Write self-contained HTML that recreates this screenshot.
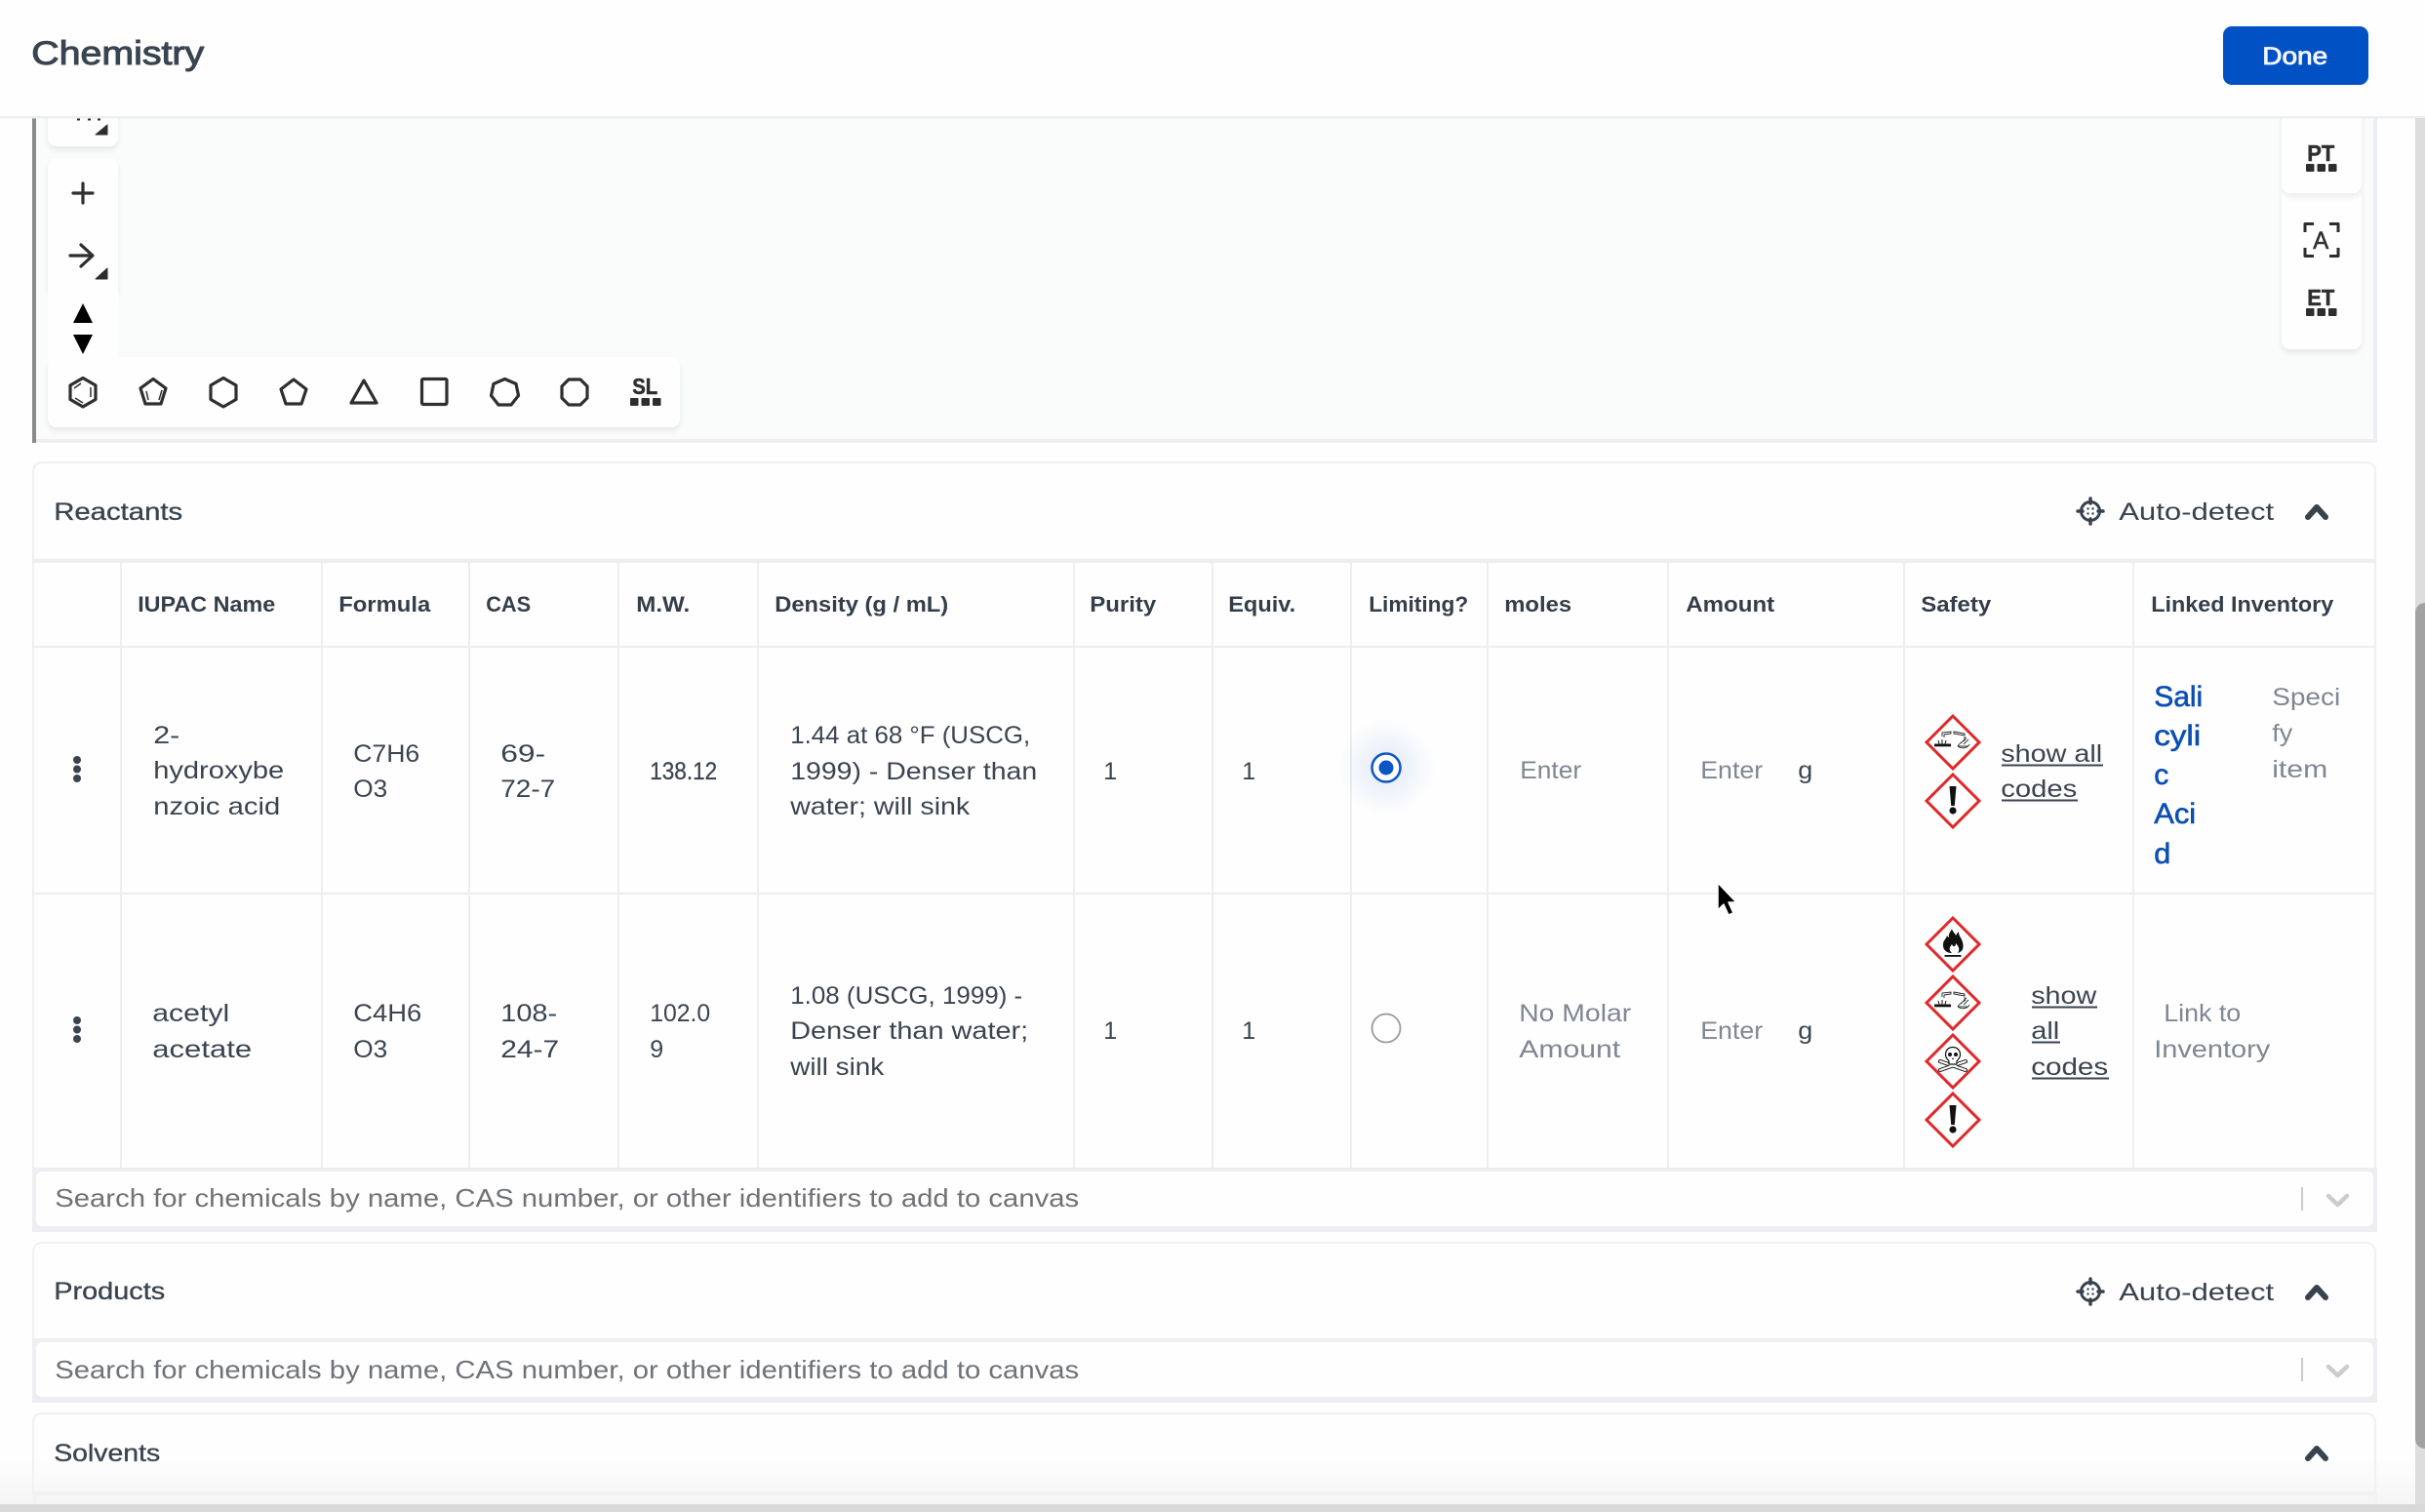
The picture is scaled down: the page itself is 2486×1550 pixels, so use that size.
<!DOCTYPE html>
<html lang="en">
<head>
<meta charset="utf-8">
<title>Chemistry</title>
<style>
html,body{margin:0;padding:0;background:#fefefe;width:2486px;height:1550px;overflow:hidden}
svg{display:block}
text{font-family:"Liberation Sans",sans-serif;font-size:25px;fill:#3a4450;transform:translateX(-.8px)}
.th{font-weight:700;font-size:22px;fill:#343e4a}
.sec{font-size:25px;stroke:#3a4450;stroke-width:.35}
.ph{fill:#7f8792}
.srch{fill:#6f7378;font-size:26px}
.link{fill:#0b4fb3;font-size:30px;stroke:#0b4fb3;stroke-width:.6}
.num{stroke:#3a4450;stroke-width:.25}
.ic{fill:none;stroke:#2e2e2e;stroke-width:3.2;stroke-linejoin:round;stroke-linecap:round}
.thin{fill:none;stroke:#2e2e2e;stroke-width:1.5}
.sq{fill:#2e2e2e}
.lbl{font-weight:700;font-size:23px;fill:#2e2e2e;stroke:#2e2e2e;stroke-width:.5}
.ln{fill:#eceef1}
.dm{fill:#fff;stroke:#e0282a;stroke-width:3}
.chev{fill:none;stroke:#38424e;stroke-width:6;stroke-linecap:round;stroke-linejoin:round}
.dn{fill:none;stroke:#cccccc;stroke-width:4.5;stroke-linecap:round;stroke-linejoin:round}
</style>
</head>
<body>
<svg xmlns="http://www.w3.org/2000/svg" width="2486" height="1550" viewBox="0 0 2486 1550">
<defs>
<filter id="sh" x="-20%" y="-20%" width="140%" height="140%"><feDropShadow dx="0" dy="4" stdDeviation="3" flood-color="#000" flood-opacity=".07"/></filter>
<radialGradient id="glow"><stop offset="0" stop-color="#0b55c4" stop-opacity=".13"/><stop offset=".5" stop-color="#0b55c4" stop-opacity=".06"/><stop offset="1" stop-color="#0b55c4" stop-opacity="0"/></radialGradient>
<linearGradient id="fade" x1="0" y1="0" x2="0" y2="1"><stop offset="0" stop-color="#f4f4f4" stop-opacity="0"/><stop offset="1" stop-color="#f4f4f4" stop-opacity=".9"/></linearGradient>
<g id="d"><polygon class="dm" points="0,-27 27,0 0,27 -27,0"/></g>
<g id="excl"><use href="#d"/><path d="M-3.500,-15 L3.500,-15 L1.800,5 L-1.800,5 Z" fill="#111"/><circle cx="0" cy="10" r="3.600" fill="#111"/></g>
<g id="corr"><use href="#d"/>
<path fill="none" stroke="#222" stroke-width=".9" d="M-11,-6 L-11,-10 L-2,-11 L-2,-9 L-9,-8 M-9,-8 L-9,-5 M1,-11 L12,-9 L12,-7 L1,-9 Z M12,-6 L12,-3"/>
<rect x="-19" y="1.500" width="17" height="2.800" fill="#111"/>
<path d="M-14,1.500 L-15,-2 M-11,1.500 L-11,-3 M-8,1.500 L-7,-2" stroke="#111" stroke-width="1"/>
<path fill="none" stroke="#333" stroke-width=".9" d="M5,4 C7,0 11,-1 13,-3 M5,4 C9,7 15,6 17,2 M8,1 L14,-5 M11,2 L16,-3 M5,4 L15,4"/></g>
<g id="flame"><use href="#d"/>
<path d="M-1,-16 C0,-12 2,-12 3,-9 C5,-12 5,-13 6,-12 C6,-8 10,-6 10.500,1 C11,6 8,8 5,9 C8,5 5,1 3,-1 C3,3 0,3 -1,0 C-3,3 -5,5 -1,9 C-6,9 -10.500,6 -10,0 C-10,-4 -7,-5 -6,-9 C-5,-7 -4,-7 -4,-7 C-5,-11 -2,-13 -1,-16 Z" fill="#111"/>
<rect x="-8.500" y="11" width="17" height="1.800" fill="#111"/></g>
<g id="skull"><use href="#d"/>
<path d="M-13,0 L13,9 M13,0 L-13,9" stroke="#111" stroke-width="4" stroke-linecap="round"/>
<path d="M-13,0 L13,9 M13,0 L-13,9" stroke="#fff" stroke-width="2" stroke-linecap="round"/>
<path fill="#fff" stroke="#111" stroke-width="1.200" d="M-7.500,-7 C-7.500,-17 7.500,-17 7.500,-7 C7.500,-3 5,-2 4,0 L4,3 L-4,3 L-4,0 C-5,-2 -7.500,-3 -7.500,-7 Z"/>
<circle cx="-3" cy="-7" r="2" fill="#111"/><circle cx="3" cy="-7" r="2" fill="#111"/><path d="M0,-4 L-1,-2 L1,-2 Z" fill="#111"/></g>
<g id="target"><circle cx="0" cy="0" r="9.500" fill="none" stroke="#38424e" stroke-width="3"/><path d="M0,-13 V-8 M0,13 V8 M-13,0 H-8 M13,0 H8" stroke="#38424e" stroke-width="3.500" stroke-linecap="round"/><circle cx="-2.500" cy="-2.500" r="1.200" fill="#38424e"/><circle cx="2.500" cy="-2.500" r="1.200" fill="#38424e"/><circle cx="-2.500" cy="2.500" r="1.200" fill="#38424e"/><circle cx="2.500" cy="2.500" r="1.200" fill="#38424e"/></g>
<g id="sq3"><rect x="0" y="0" width="8.500" height="8" rx="1" class="sq"/><rect x="11.500" y="0" width="8.500" height="8" rx="1" class="sq"/><rect x="23" y="0" width="8.500" height="8" rx="1" class="sq"/></g>
</defs>

<rect width="2486" height="1550" fill="#fefefe"/>

<!-- canvas -->
<rect x="33" y="121" width="2404" height="333" fill="#eceef1"/>
<rect x="37" y="121" width="2396" height="329" fill="#fafbfb"/>
<rect x="33" y="121" width="4" height="333" fill="#8a8a8a"/>

<!-- left toolbar -->
<rect x="49" y="60" width="72" height="90" rx="9" fill="#fefefe" filter="url(#sh)"/>
<polygon points="110,128 110,138 98,138" fill="#2e2e2e" stroke="#2e2e2e" stroke-width="1" stroke-linejoin="round"/>
<rect x="79" y="121" width="3" height="2.500" fill="#2e2e2e"/><rect x="90" y="121" width="3" height="2.500" fill="#2e2e2e"/><rect x="100" y="121" width="3" height="2.500" fill="#2e2e2e"/>
<rect x="49" y="162" width="72" height="140" rx="9" fill="#fefefe" filter="url(#sh)"/>
<rect x="49" y="290" width="72" height="80" fill="#fefefe"/>
<path class="ic" d="M85,188 V208 M75,198 H95"/>
<path class="ic" d="M72,262 H94 M83,251 L95,262 L83,273"/>
<polygon points="110,275 110,286 98,286" fill="#2e2e2e" stroke="#2e2e2e" stroke-width="1" stroke-linejoin="round"/>
<polygon points="85,311 95,331 75,331" fill="#000"/>
<polygon points="75,343 95,343 85,363" fill="#000"/>

<!-- bottom toolbar -->
<rect x="49" y="366" width="648" height="72" rx="9" fill="#fefefe" filter="url(#sh)"/>
<polygon class="ic" points="85,387.500 98,395 98,409.500 85,417 72,409.500 72,395"/>
<path class="thin" d="M76,398 L83,393 M93,397 V407 M77,408 L85,413"/>
<polygon class="ic" points="157,388.500 170,398 165,414 149,414 144,398"/>
<path class="thin" d="M150,401 L152,410 M166,400 L163,410"/>
<polygon class="ic" points="229,387.500 242,395 242,409.500 229,417 216,409.500 216,395"/>
<polygon class="ic" points="301,389 314,399 309,414 293,414 288,399"/>
<polygon class="ic" points="373,390 386,413 360,413"/>
<rect class="ic" x="432.500" y="388.500" width="25.500" height="26" rx="1.500"/>
<polygon class="ic" points="517.500,388.500 529,393.500 531.500,405.500 524,415 511,415 503.500,405.500 506,393.500"/>
<polygon class="ic" points="583,389 595,389 602,396 602,408 595,415 583,415 576,408 576,396"/>
<text class="lbl" x="649" y="404" textLength="26" lengthAdjust="spacingAndGlyphs">SL</text>
<use href="#sq3" x="646" y="408"/>

<!-- right toolbar -->
<rect x="2339" y="190" width="82" height="168" rx="9" fill="#fefefe" filter="url(#sh)"/>
<rect x="2339" y="60" width="82" height="138" rx="9" fill="#fefefe" filter="url(#sh)"/>
<text class="lbl" x="2366" y="165" textLength="28" lengthAdjust="spacingAndGlyphs">PT</text>
<use href="#sq3" x="2364" y="168"/>
<path d="M2363,238 V229.500 H2372 M2388,229.500 H2397 V238 M2363,254 V262.500 H2372 M2388,262.500 H2397 V254" fill="none" stroke="#2e2e2e" stroke-width="3" stroke-linejoin="round"/>
<text x="2372" y="255" textLength="16" lengthAdjust="spacingAndGlyphs" style="fill:#2e2e2e;stroke:#2e2e2e;stroke-width:.5">A</text>
<text class="lbl" x="2366" y="313" textLength="28" lengthAdjust="spacingAndGlyphs">ET</text>
<use href="#sq3" x="2364" y="316"/>

<!-- header -->
<rect x="0" y="0" width="2486" height="119" fill="#fefefe"/>
<rect x="0" y="119" width="2486" height="2.500" fill="#eceef1"/>
<text x="33" y="66" style="font-size:34px;fill:#3a4450;stroke:#3a4450;stroke-width:1" textLength="177" lengthAdjust="spacingAndGlyphs">Chemistry</text>
<rect x="2279" y="27" width="149" height="60" rx="9" fill="#0251c4"/>
<text x="2320" y="66" style="fill:#f4f8ff;font-size:25px;stroke:#f4f8ff;stroke-width:.8" textLength="67" lengthAdjust="spacingAndGlyphs">Done</text>

<!-- scrollbars -->
<rect x="2476" y="121" width="10" height="1429" fill="#dddddd"/>
<path d="M2476,628 a10,10 0 0 1 10,-10 V1485 a10,10 0 0 1 -10,-10 Z" fill="#a2a2a2"/>

<!-- Reactants panel -->
<path d="M34,1199 V483 a9,9 0 0 1 9,-9 H2426 a9,9 0 0 1 9,9 V1199" fill="#fefefe" stroke="#eef0f3" stroke-width="2"/>
<text class="sec" x="56" y="533" textLength="132" lengthAdjust="spacingAndGlyphs">Reactants</text>
<use href="#target" x="2143" y="524"/>
<text x="2173" y="533" textLength="159" lengthAdjust="spacingAndGlyphs" style="fill:#38424e">Auto-detect</text>
<path class="chev" d="M2366,530 L2375,520 L2384,530"/>
<rect class="ln" x="33" y="573" width="2403" height="4"/>
<rect class="ln" x="33" y="662" width="2403" height="2"/>
<rect class="ln" x="33" y="915" width="2403" height="2"/>
<!-- column lines -->
<g class="ln">
<rect x="123" y="577" width="2" height="622"/><rect x="329" y="577" width="2" height="622"/><rect x="480" y="577" width="2" height="622"/><rect x="633" y="577" width="2" height="622"/><rect x="776" y="577" width="2" height="622"/><rect x="1100" y="577" width="2" height="622"/><rect x="1242" y="577" width="2" height="622"/><rect x="1384" y="577" width="2" height="622"/><rect x="1524" y="577" width="2" height="622"/><rect x="1709" y="577" width="2" height="622"/><rect x="1951" y="577" width="2" height="622"/><rect x="2186" y="577" width="2" height="622"/>
</g>
<!-- table header -->
<text class="th" x="142" y="627" textLength="141" lengthAdjust="spacingAndGlyphs">IUPAC Name</text>
<text class="th" x="348" y="627" textLength="94" lengthAdjust="spacingAndGlyphs">Formula</text>
<text class="th" x="499" y="627" textLength="46" lengthAdjust="spacingAndGlyphs">CAS</text>
<text class="th" x="653" y="627" textLength="55" lengthAdjust="spacingAndGlyphs">M.W.</text>
<text class="th" x="795" y="627" textLength="178" lengthAdjust="spacingAndGlyphs">Density (g / mL)</text>
<text class="th" x="1118" y="627" textLength="68" lengthAdjust="spacingAndGlyphs">Purity</text>
<text class="th" x="1260" y="627" textLength="69" lengthAdjust="spacingAndGlyphs">Equiv.</text>
<text class="th" x="1404" y="627" textLength="102" lengthAdjust="spacingAndGlyphs">Limiting?</text>
<text class="th" x="1543" y="627" textLength="69" lengthAdjust="spacingAndGlyphs">moles</text>
<text class="th" x="1729" y="627" textLength="91" lengthAdjust="spacingAndGlyphs">Amount</text>
<text class="th" x="1970" y="627" textLength="72" lengthAdjust="spacingAndGlyphs">Safety</text>
<text class="th" x="2206" y="627" textLength="187" lengthAdjust="spacingAndGlyphs">Linked Inventory</text>

<!-- row 1 -->
<circle cx="79" cy="779" r="4" fill="#3a4450"/><circle cx="79" cy="788.500" r="4" fill="#3a4450"/><circle cx="79" cy="798" r="4" fill="#3a4450"/>
<text x="158" y="762" textLength="27" lengthAdjust="spacingAndGlyphs">2-</text>
<text x="158" y="798" textLength="134" lengthAdjust="spacingAndGlyphs">hydroxybe</text>
<text x="158" y="835" textLength="130" lengthAdjust="spacingAndGlyphs">nzoic acid</text>
<text x="363" y="781" textLength="68" lengthAdjust="spacingAndGlyphs">C7H6</text>
<text x="363" y="817" textLength="35" lengthAdjust="spacingAndGlyphs">O3</text>
<text x="514" y="781" textLength="46" lengthAdjust="spacingAndGlyphs">69-</text>
<text x="514" y="817" textLength="56" lengthAdjust="spacingAndGlyphs">72-7</text>
<text class="num" x="667" y="799" textLength="69" lengthAdjust="spacingAndGlyphs">138.12</text>
<text x="811" y="762" textLength="246" lengthAdjust="spacingAndGlyphs">1.44 at 68 °F (USCG,</text>
<text x="811" y="799" textLength="253" lengthAdjust="spacingAndGlyphs">1999) - Denser than</text>
<text x="811" y="835" textLength="184" lengthAdjust="spacingAndGlyphs">water; will sink</text>
<text x="1132" y="799">1</text>
<text x="1274" y="799">1</text>
<circle cx="1421" cy="787" r="50" fill="url(#glow)"/>
<circle cx="1421" cy="787" r="14.500" fill="#fff" stroke="#0b55c4" stroke-width="2.500"/>
<circle cx="1421" cy="787" r="7.500" fill="#0b55c4"/>
<text class="ph" x="1559" y="798" textLength="63" lengthAdjust="spacingAndGlyphs">Enter</text>
<text class="ph" x="1744" y="798" textLength="64" lengthAdjust="spacingAndGlyphs">Enter</text>
<text x="1844" y="798" textLength="15" lengthAdjust="spacingAndGlyphs">g</text>
<use href="#corr" x="2002" y="761"/>
<use href="#excl" x="2002" y="821"/>
<text x="2052" y="781" textLength="104" lengthAdjust="spacingAndGlyphs">show all</text>
<rect x="2052" y="783.500" width="104" height="2" fill="#3a4450"/>
<text x="2052" y="817" textLength="78" lengthAdjust="spacingAndGlyphs">codes</text>
<rect x="2052" y="819.500" width="78" height="2" fill="#3a4450"/>
<text class="link" x="2209" y="724" textLength="50" lengthAdjust="spacingAndGlyphs">Sali</text>
<text class="link" x="2209" y="764" textLength="48" lengthAdjust="spacingAndGlyphs">cyli</text>
<text class="link" x="2209" y="804" textLength="15" lengthAdjust="spacingAndGlyphs">c</text>
<text class="link" x="2209" y="844" textLength="43" lengthAdjust="spacingAndGlyphs">Aci</text>
<text class="link" x="2209" y="885" textLength="17" lengthAdjust="spacingAndGlyphs">d</text>
<text class="ph" x="2330" y="723" textLength="70" lengthAdjust="spacingAndGlyphs">Speci</text>
<text class="ph" x="2330" y="760" textLength="21" lengthAdjust="spacingAndGlyphs">fy</text>
<text class="ph" x="2330" y="797" textLength="57" lengthAdjust="spacingAndGlyphs">item</text>

<!-- row 2 -->
<circle cx="79" cy="1046" r="4" fill="#3a4450"/><circle cx="79" cy="1055.500" r="4" fill="#3a4450"/><circle cx="79" cy="1065" r="4" fill="#3a4450"/>
<text x="157" y="1047" textLength="79" lengthAdjust="spacingAndGlyphs">acetyl</text>
<text x="157" y="1084" textLength="102" lengthAdjust="spacingAndGlyphs">acetate</text>
<text x="363" y="1047" textLength="70" lengthAdjust="spacingAndGlyphs">C4H6</text>
<text x="363" y="1084" textLength="35" lengthAdjust="spacingAndGlyphs">O3</text>
<text x="514" y="1047" textLength="58" lengthAdjust="spacingAndGlyphs">108-</text>
<text x="514" y="1084" textLength="60" lengthAdjust="spacingAndGlyphs">24-7</text>
<text x="667" y="1047" textLength="62" lengthAdjust="spacingAndGlyphs">102.0</text>
<text x="667" y="1084">9</text>
<text x="811" y="1029" textLength="238" lengthAdjust="spacingAndGlyphs">1.08 (USCG, 1999) -</text>
<text x="811" y="1065" textLength="244" lengthAdjust="spacingAndGlyphs">Denser than water;</text>
<text x="811" y="1102" textLength="96" lengthAdjust="spacingAndGlyphs">will sink</text>
<text x="1132" y="1065">1</text>
<text x="1274" y="1065">1</text>
<circle cx="1421" cy="1054" r="14.500" fill="#fff" stroke="#9a9a9a" stroke-width="1.800"/>
<text class="ph" x="1558" y="1047" textLength="115" lengthAdjust="spacingAndGlyphs">No Molar</text>
<text class="ph" x="1558" y="1084" textLength="104" lengthAdjust="spacingAndGlyphs">Amount</text>
<text class="ph" x="1744" y="1065" textLength="64" lengthAdjust="spacingAndGlyphs">Enter</text>
<text x="1844" y="1065" textLength="15" lengthAdjust="spacingAndGlyphs">g</text>
<use href="#flame" x="2002" y="968"/>
<use href="#corr" x="2002" y="1028"/>
<use href="#skull" x="2002" y="1088"/>
<use href="#excl" x="2002" y="1148"/>
<text x="2083" y="1029" textLength="67" lengthAdjust="spacingAndGlyphs">show</text>
<rect x="2083" y="1031.500" width="67" height="2" fill="#3a4450"/>
<text x="2083" y="1065" textLength="29" lengthAdjust="spacingAndGlyphs">all</text>
<rect x="2083" y="1067.500" width="29" height="2" fill="#3a4450"/>
<text x="2083" y="1102" textLength="79" lengthAdjust="spacingAndGlyphs">codes</text>
<rect x="2083" y="1104.500" width="79" height="2" fill="#3a4450"/>
<text class="ph" x="2219" y="1047" textLength="79" lengthAdjust="spacingAndGlyphs">Link to</text>
<text class="ph" x="2209" y="1084" textLength="119" lengthAdjust="spacingAndGlyphs">Inventory</text>

<!-- search 1 -->
<rect class="ln" x="33" y="1197" width="2404" height="66"/>
<rect x="37" y="1201" width="2396" height="56" rx="6" fill="#fefefe"/>
<text class="srch" x="57" y="1237" textLength="1050" lengthAdjust="spacingAndGlyphs">Search for chemicals by name, CAS number, or other identifiers to add to canvas</text>
<rect x="2359" y="1217" width="2" height="24" fill="#cccccc"/>
<path class="dn" d="M2387,1226 L2396.500,1235 L2406,1226"/>

<!-- Products -->
<path d="M34,1376 V1283 a9,9 0 0 1 9,-9 H2426 a9,9 0 0 1 9,9 V1376" fill="#fefefe" stroke="#eef0f3" stroke-width="2"/>
<text class="sec" x="56" y="1332" textLength="114" lengthAdjust="spacingAndGlyphs">Products</text>
<use href="#target" x="2143" y="1324"/>
<text x="2173" y="1333" textLength="159" lengthAdjust="spacingAndGlyphs" style="fill:#38424e">Auto-detect</text>
<path class="chev" d="M2366,1330 L2375,1320 L2384,1330"/>
<rect class="ln" x="33" y="1372" width="2404" height="66"/>
<rect x="37" y="1376" width="2396" height="56" rx="6" fill="#fefefe"/>
<text class="srch" x="57" y="1413" textLength="1050" lengthAdjust="spacingAndGlyphs">Search for chemicals by name, CAS number, or other identifiers to add to canvas</text>
<rect x="2359" y="1392" width="2" height="24" fill="#cccccc"/>
<path class="dn" d="M2387,1401 L2396.500,1410 L2406,1401"/>

<!-- Solvents -->
<path d="M34,1545 V1458 a9,9 0 0 1 9,-9 H2426 a9,9 0 0 1 9,9 V1545" fill="#fefefe" stroke="#eef0f3" stroke-width="2"/>
<text class="sec" x="56" y="1498" textLength="109" lengthAdjust="spacingAndGlyphs">Solvents</text>
<path class="chev" d="M2366,1495 L2375,1485 L2384,1495"/>
<rect class="ln" x="33" y="1529" width="2404" height="20"/>
<rect x="37" y="1533" width="2396" height="20" rx="6" fill="#fefefe"/>
<rect x="0" y="1495" width="2476" height="47" fill="url(#fade)"/>
<rect x="0" y="1542" width="2486" height="8" fill="#d9d9d9"/>

<!-- cursor -->
<path d="M1761,905 L1761,933 L1767,927 L1772,938 L1777,936 L1772,925 L1780,925 Z" fill="#000" stroke="#fff" stroke-width="1.500" stroke-linejoin="round"/>
</svg>
</body>
</html>
